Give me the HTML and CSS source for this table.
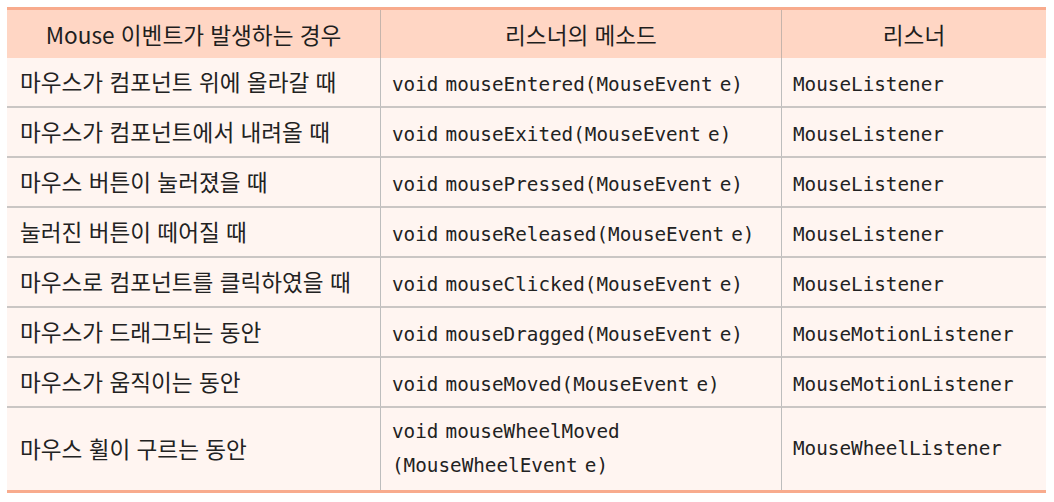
FILE: index.html
```html
<!DOCTYPE html>
<html lang="ko">
<head>
<meta charset="utf-8">
<link rel="stylesheet" href="styles.css">
</head>
<body>
<table class="events">
  <thead>
    <tr>
      <th class="c1">Mouse 이벤트가 발생하는 경우</th>
      <th class="c2">리스너의 메소드</th>
      <th class="c3">리스너</th>
    </tr>
  </thead>
  <tbody>
    <tr><td>마우스가 컴포넌트 위에 올라갈 때</td><td class="code">void mouseEntered(MouseEvent e)</td><td class="code">MouseListener</td></tr>
    <tr><td>마우스가 컴포넌트에서 내려올 때</td><td class="code">void mouseExited(MouseEvent e)</td><td class="code">MouseListener</td></tr>
    <tr><td>마우스 버튼이 눌러졌을 때</td><td class="code">void mousePressed(MouseEvent e)</td><td class="code">MouseListener</td></tr>
    <tr><td>눌러진 버튼이 떼어질 때</td><td class="code">void mouseReleased(MouseEvent e)</td><td class="code">MouseListener</td></tr>
    <tr><td>마우스로 컴포넌트를 클릭하였을 때</td><td class="code">void mouseClicked(MouseEvent e)</td><td class="code">MouseListener</td></tr>
    <tr><td>마우스가 드래그되는 동안</td><td class="code">void mouseDragged(MouseEvent e)</td><td class="code">MouseMotionListener</td></tr>
    <tr><td>마우스가 움직이는 동안</td><td class="code">void mouseMoved(MouseEvent e)</td><td class="code">MouseMotionListener</td></tr>
    <tr class="tall"><td>마우스 휠이 구르는 동안</td><td class="code">void mouseWheelMoved<br>(MouseWheelEvent e)</td><td class="code">MouseWheelListener</td></tr>
  </tbody>
</table>
</body>
</html>
```
FILE: styles.css
```css
html, body {
  margin: 0;
  padding: 0;
  background: #ffffff;
}

body {
  padding: 7px;
  font-family: "Noto Sans CJK KR", "Noto Sans", sans-serif;
  color: #222222;
}

.events {
  width: 1039px;
  border-collapse: separate;
  border-spacing: 0;
  border-top: 3px solid #f8ab8d;
  border-bottom: 3px solid #f8ab8d;
  table-layout: fixed;
}

.events th,
.events td {
  padding: 0;
  box-sizing: border-box;
  vertical-align: middle;
}

.events th {
  background: #ffd6c4;
  font-weight: normal;
  font-size: 22.6px;
  height: 48px;
  text-align: center;
  color: #1e1e1e;
}

.events th + th {
  border-left: 1px solid #c6b4ab;
}

.c1 { width: 373px; }
.c2 { width: 401px; }
.c3 { width: 265px; }

.events td {
  background: #fff5f1;
  font-size: 22.6px;
  height: 50px;
  padding-left: 13px;
  border-top: 2px solid #cac6c4;
  line-height: 34px;
}

.events tbody tr:first-child td {
  border-top: none;
  height: 48px;
}

.events td + td {
  border-left: 1px solid #bdbdbd;
  padding-left: 11px;
}

.events td.code {
  font-family: "DejaVu Sans Mono", monospace;
  font-size: 19.3px;
  word-spacing: -4.5px;
  padding-top: 5px;
}

.events tr.tall td.code {
  padding-top: 0;
}

.events tr.tall td {
  height: 84px;
}
```
